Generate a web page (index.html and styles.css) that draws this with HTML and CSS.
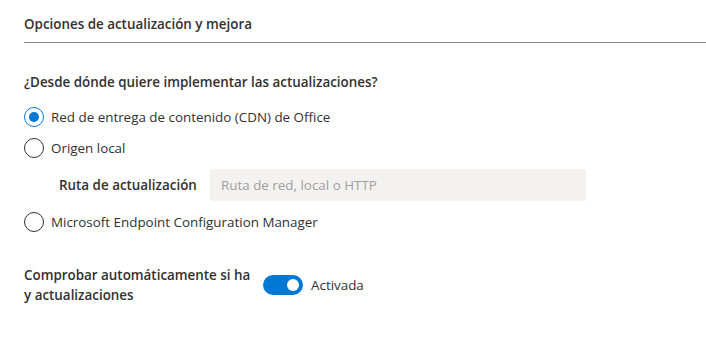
FILE: index.html
```html
<!DOCTYPE html>
<html lang="es">
<head>
  <meta charset="UTF-8" />
  <title>Opciones de actualización y mejora</title>
  <link rel="stylesheet" href="styles.css">
</head>
<body>
  <section class="panel">
    <h2 class="panel-title">Opciones de actualización y mejora</h2>

    <div class="question">¿Desde dónde quiere implementar las actualizaciones?</div>

    <label class="radio checked"><span class="circle"></span>Red de entrega de contenido (CDN) de Office</label>
    <label class="radio"><span class="circle"></span>Origen local</label>

    <div class="path-row">
      <span class="path-label">Ruta de actualización</span>
      <div class="path-input">Ruta de red, local o HTTP</div>
    </div>

    <label class="radio"><span class="circle"></span>Microsoft Endpoint Configuration Manager</label>

    <div class="toggle-row">
      <div class="toggle-label">Comprobar automáticamente si ha y actualizaciones</div>
      <span class="toggle"><span class="knob"></span></span>
      <span class="toggle-text">Activada</span>
    </div>
  </section>
</body>
</html>
```

FILE: styles.css
```css
* { margin: 0; padding: 0; box-sizing: border-box; }
body { font-family: 'Open Sans', 'Noto Sans', sans-serif; font-size: 13.4px; color: #323130; background: #fff; }
.panel { padding: 14px 0 0 24px; }
.panel-title { font-size: 13.4px; font-weight: 600; line-height: 20px; padding-bottom: 8px; border-bottom: 1px solid #8a8886; }
.question { font-weight: 600; line-height: 20px; margin-top: 29px; margin-bottom: 15px; }
.radio { display: flex; align-items: center; gap: 7px; height: 20px; line-height: 20px; margin-bottom: 11px; }
.circle { flex: none; width: 20px; height: 20px; border: 1px solid #323130; border-radius: 50%; display: flex; align-items: center; justify-content: center; }
.radio.checked .circle { border-color: #0078d4; }
.radio.checked .circle::after { content: ''; width: 10px; height: 10px; border-radius: 50%; background: #0078d4; }
.path-row { display: flex; align-items: center; margin: 5px 0 11px 35px; }
.path-label { font-weight: 600; width: 151px; }
.path-input { width: 376px; height: 32px; line-height: 32px; background: #f3f2f1; border-radius: 2px; padding-left: 11px; color: #a19f9d; }
.toggle-row { display: flex; align-items: center; margin-top: 33px; }
.toggle-label { font-weight: 600; width: 239px; padding-right: 12px; line-height: 20px; }
.toggle { width: 40px; height: 20px; border-radius: 10px; background: #0078d4; display: flex; align-items: center; justify-content: flex-end; padding-right: 4px; }
.knob { width: 12px; height: 12px; border-radius: 50%; background: #fff; }
.toggle-text { margin-left: 8px; }
```
